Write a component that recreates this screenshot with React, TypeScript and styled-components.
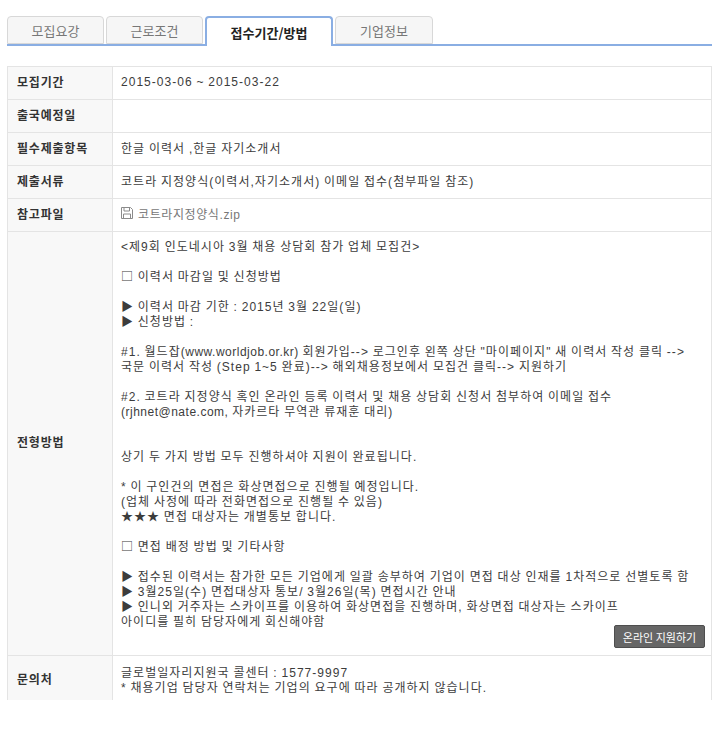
import React from "react";
import styled, { createGlobalStyle } from "styled-components";

const Global = createGlobalStyle`
  html, body { margin: 0; padding: 0; background: #fff; }
  body { font-family: "Noto Sans CJK KR", "Liberation Sans", sans-serif; font-size: 12px; color: #333; }
`;

const Page = styled.div`
  width: 726px;
  height: 700px;
  overflow: hidden;
  padding: 16px 14px 0 7px;
  box-sizing: border-box;
`;

const TabBar = styled.ul`
  display: flex;
  gap: 2px;
  margin: 0 0 20px;
  padding: 0;
  list-style: none;
  height: 30px;
  box-sizing: border-box;
  border-bottom: 2px solid #8aaee3;
`;

const Tab = styled.li<{ $active?: boolean; $w: number }>`
  width: ${(p) => p.$w}px;
  height: ${(p) => (p.$active ? 30 : 28)}px;
  box-sizing: border-box;
  display: flex;
  align-items: center;
  justify-content: center;
  font-size: 13px;
  border-radius: 4px 4px 0 0;
  color: ${(p) => (p.$active ? "#222" : "#777")};
  font-weight: ${(p) => (p.$active ? 700 : 400)};
  background: ${(p) => (p.$active ? "#fff" : "#f6f6f6")};
  border: ${(p) => (p.$active ? "2px solid #8aaee3" : "1px solid #d8d8d8")};
  border-bottom: ${(p) => (p.$active ? "none" : "1px solid #d8d8d8")};
`;

const Table = styled.table`
  width: 705px;
  border-collapse: collapse;
  table-layout: fixed;
  border: 1px solid #e4e4e4;
`;

const Head = styled.th`
  width: 105px;
  box-sizing: border-box;
  background: #f8f8f8;
  border: 1px solid #e4e4e4;
  padding: 0 0 4px 9px;
  text-align: left;
  font-size: 12px;
  font-weight: 700;
  color: #333;
  letter-spacing: 0.8px;
`;

const Cell = styled.td`
  box-sizing: border-box;
  border: 1px solid #e4e4e4;
  padding: 0 8px 3px;
  height: 33px;
  font-family: "Liberation Sans", "Noto Sans CJK KR", sans-serif;
  font-size: 12px;
  color: #3c3c3c;
  letter-spacing: 1.03px;
  word-spacing: -0.6px;
`;

const BodyCell = styled(Cell)`
  padding: 8px 6px 7px 8px;
  vertical-align: top;
  height: auto;
`;

const ContactCell = styled(BodyCell)`
  padding-top: 10px;
  padding-bottom: 8px;
`;

const Line = styled.div`
  width: fit-content;
  height: 15px;
  white-space: pre;
  line-height: 15px;
`;

const Narrow = styled.span`
  letter-spacing: 0.5px;
`;

const BoxGlyph = styled.span`
  font-family: "Noto Sans CJK KR", sans-serif;
  line-height: 0;
  display: inline-block;
  vertical-align: baseline;
`;

const Actions = styled.div`
  display: flex;
  justify-content: flex-end;
  margin-top: -5px;
`;

const Apply = styled.button`
  width: 91px;
  height: 23px;
  border: 1px solid #4e4e4e;
  border-radius: 2px;
  background: #666;
  color: #fff;
  font: 11px "Noto Sans CJK KR", sans-serif;
  padding: 0;
`;

const FileLink = styled.span`
  display: inline-flex;
  align-items: center;
  gap: 5px;
  color: #777;
  letter-spacing: 0.6px;
`;

const FloppyIcon = () => (
  <svg width="12" height="12" viewBox="0 0 12 12" fill="none" stroke="#8a8a8a" strokeWidth="1">
    <path d="M.5.5h9l2 2v9H.5z" />
    <path d="M3 .5v3.5h5.5V.5M2.5 11.5V7h7v4.5" />
  </svg>
);

const notice: React.ReactNode[] = [
  "<제9회 인도네시아 3월 채용 상담회 참가 업체 모집건>",
  "",
  <><BoxGlyph>□</BoxGlyph> 이력서 마감일 및 신청방법</>,
  "",
  "▶ 이력서 마감 기한 : 2015년 3월 22일(일)",
  "▶ 신청방법 :",
  "",
  <>#1. 월드잡<Narrow>(www.worldjob.or.kr)</Narrow> 회원가입--&gt; 로그인후 왼쪽 상단 "마이페이지" 새 이력서 작성 클릭 --&gt;</>,
  "국문 이력서 작성 (Step 1~5 완료)--> 해외채용정보에서 모집건 클릭--> 지원하기",
  "",
  "#2. 코트라 지정양식 혹인 온라인 등록 이력서 및 채용 상담회 신청서 첨부하여 이메일 접수",
  <><Narrow>(rjhnet@nate.com,</Narrow> 자카르타 무역관 류재훈 대리)</>,
  "",
  "",
  "상기 두 가지 방법 모두 진행하셔야 지원이 완료됩니다.",
  "",
  "* 이 구인건의 면접은 화상면접으로 진행될 예정입니다.",
  "(업체 사정에 따라 전화면접으로 진행될 수 있음)",
  "★★★ 면접 대상자는 개별통보 합니다.",
  "",
  <><BoxGlyph>□</BoxGlyph> 면접 배정 방법 및 기타사항</>,
  "",
  "▶ 접수된 이력서는 참가한 모든 기업에게 일괄 송부하여 기업이 면접 대상 인재를 1차적으로 선별토록 함",
  "▶ 3월25일(수) 면접대상자 통보/ 3월26일(목) 면접시간 안내",
  "▶ 인니외 거주자는 스카이프를 이용하여 화상면접을 진행하며, 화상면접 대상자는 스카이프",
  "아이디를 필히 담당자에게 회신해야함",
];

export default function App() {
  return (
    <Page>
      <Global />
      <TabBar>
        <Tab $w={97}>모집요강</Tab>
        <Tab $w={97}>근로조건</Tab>
        <Tab $w={128} $active>접수기간/방법</Tab>
        <Tab $w={98}>기업정보</Tab>
      </TabBar>
      <Table>
        <tbody>
          <tr><Head>모집기간</Head><Cell>2015-03-06 ~ 2015-03-22</Cell></tr>
          <tr><Head>출국예정일</Head><Cell /></tr>
          <tr><Head>필수제출항목</Head><Cell>한글 이력서 ,한글 자기소개서</Cell></tr>
          <tr><Head>제출서류</Head><Cell>코트라 지정양식(이력서,자기소개서) 이메일 접수(첨부파일 참조)</Cell></tr>
          <tr><Head>참고파일</Head><Cell><FileLink><FloppyIcon />코트라지정양식.zip</FileLink></Cell></tr>
          <tr>
            <Head>전형방법</Head>
            <BodyCell>
              {notice.map((line, i) => <Line key={i}>{line}</Line>)}
              <Actions><Apply>온라인 지원하기</Apply></Actions>
            </BodyCell>
          </tr>
          <tr>
            <Head>문의처</Head>
            <ContactCell>
              <Line>글로벌일자리지원국 콜센터 : 1577-9997</Line>
              <Line>* 채용기업 담당자 연락처는 기업의 요구에 따라 공개하지 않습니다.</Line>
            </ContactCell>
          </tr>
        </tbody>
      </Table>
    </Page>
  );
}
